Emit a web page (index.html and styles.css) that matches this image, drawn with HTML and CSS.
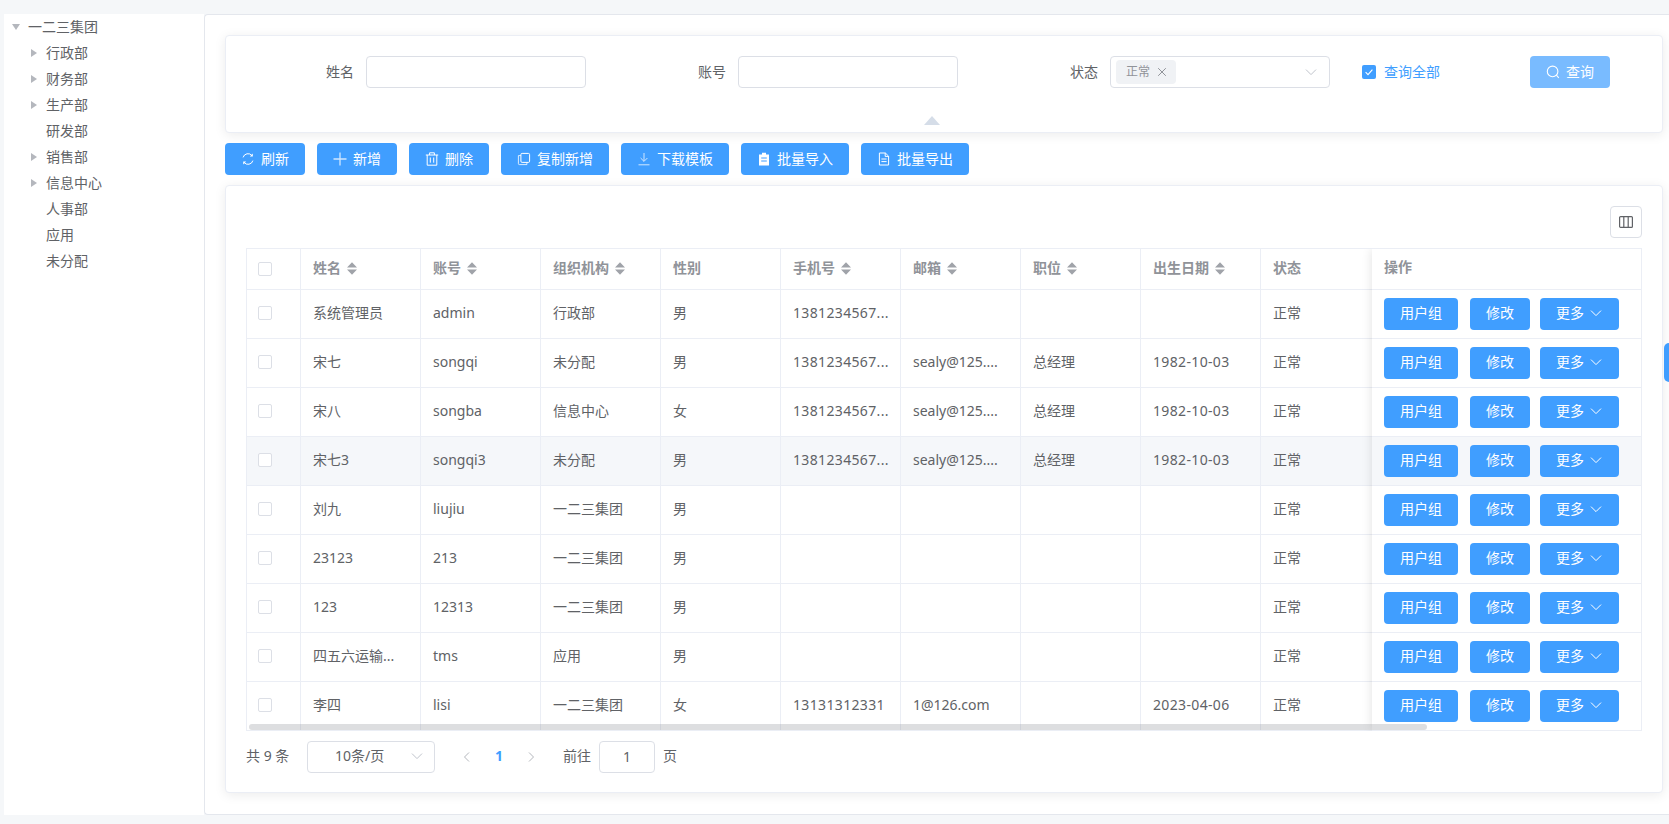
FILE: index.html
```html
<!DOCTYPE html>
<html lang="zh-CN">
<head>
<meta charset="utf-8">
<title>用户管理</title>
<link rel="stylesheet" href="styles.css">
</head>
<body>
<svg class="sprite" xmlns="http://www.w3.org/2000/svg">
  <symbol id="i-refresh" viewBox="0 0 14 14"><path d="M2.1 5.4A5.1 5.1 0 0 1 11 3.6" fill="none" stroke="currentColor"/><path d="M11.9 8.6A5.1 5.1 0 0 1 3 10.4" fill="none" stroke="currentColor"/><path d="M11.8 1.6v3h-3zM2.2 12.4v-3h3z" fill="currentColor"/></symbol>
  <symbol id="i-plus" viewBox="0 0 14 14"><path d="M7 .5v13M.5 7h13" fill="none" stroke="currentColor" stroke-width="1.3"/></symbol>
  <symbol id="i-trash" viewBox="0 0 14 14"><path d="M.8 3h12.4M4.6 3V.8h4.8V3M2.2 3v10.2h9.6V3M5.3 5.5v5.2M8.7 5.5v5.2" fill="none" stroke="currentColor"/></symbol>
  <symbol id="i-copy" viewBox="0 0 14 14"><rect x="3.9" y="1.4" width="8.7" height="9" rx="1.2" fill="none" stroke="currentColor"/><path d="M3.9 3.6H1.4v8a1 1 0 0 0 1 1h7.5v-2.2" fill="none" stroke="currentColor" opacity=".8"/></symbol>
  <symbol id="i-download" viewBox="0 0 14 14"><path d="M7 1v8.2M3.6 6l3.4 3.4L10.4 6M1.5 12.8h11" fill="none" stroke="currentColor"/></symbol>
  <symbol id="i-clip" viewBox="0 0 14 14"><path d="M5 .8h4v1.6h3v11H2v-11h3z" fill="currentColor"/><path d="M4.2 6h5.6M4.2 9h5.6" stroke="#409eff" stroke-width="1.2"/></symbol>
  <symbol id="i-doc" viewBox="0 0 14 14"><path d="M2.4 1h6l3.2 3.2v8.8H2.4zM8.2 1v3.4h3.4M4.4 7h5.2M4.4 9.6h5.2" fill="none" stroke="currentColor"/></symbol>
  <symbol id="i-search" viewBox="0 0 14 14"><circle cx="6.6" cy="6.4" r="5.3" fill="none" stroke="currentColor" stroke-width="1.1"/><path d="M10.4 10.2l2.4 2.6" fill="none" stroke="currentColor" stroke-width="1.1"/></symbol>
  <symbol id="i-down" viewBox="0 0 14 14"><path d="M2 4.6l5 5 5-5" fill="none" stroke="currentColor"/></symbol>
  <symbol id="i-left" viewBox="0 0 12 12"><path d="M8 1.5L3.5 6 8 10.5" fill="none" stroke="currentColor"/></symbol>
  <symbol id="i-right" viewBox="0 0 12 12"><path d="M4 1.5L8.5 6 4 10.5" fill="none" stroke="currentColor"/></symbol>
  <symbol id="i-close" viewBox="0 0 12 12"><path d="M2.2 2.2l7.6 7.6M9.8 2.2l-7.6 7.6" fill="none" stroke="currentColor"/></symbol>
  <symbol id="i-cols" viewBox="0 0 14 14"><rect x=".6" y="1.6" width="12.8" height="10.8" rx="1" fill="none" stroke="currentColor" stroke-width="1.2"/><path d="M4.8 1.6v10.8M9.2 1.6v10.8" fill="none" stroke="currentColor" stroke-width="1.2"/></symbol>
  <symbol id="i-sort" viewBox="0 0 10 13"><path d="M5 .2L10 5.6H0zM5 12.8L0 7.4h10z" fill="currentColor"/></symbol>
</svg>

<div class="app">
  <aside class="sidebar">
    <ul class="tree">
      <li class="node"><span class="caret open"></span>一二三集团</li>
      <li class="node child"><span class="caret"></span>行政部</li>
      <li class="node child"><span class="caret"></span>财务部</li>
      <li class="node child"><span class="caret"></span>生产部</li>
      <li class="node child"><span class="caret none"></span>研发部</li>
      <li class="node child"><span class="caret"></span>销售部</li>
      <li class="node child"><span class="caret"></span>信息中心</li>
      <li class="node child"><span class="caret none"></span>人事部</li>
      <li class="node child"><span class="caret none"></span>应用</li>
      <li class="node child"><span class="caret none"></span>未分配</li>
    </ul>
  </aside>

  <main class="panel">
    <section class="card search-card">
      <form class="search-form">
        <div class="field"><label class="field-label">姓名</label><input class="text-input" type="text"></div>
        <div class="field"><label class="field-label">账号</label><input class="text-input" type="text"></div>
        <div class="field">
          <label class="field-label">状态</label>
          <div class="select">
            <span class="tag">正常<svg class="tag-close"><use href="#i-close"/></svg></span>
            <svg class="select-arrow"><use href="#i-down"/></svg>
          </div>
        </div>
        <div class="check-field"><span class="checkbox checked"><svg viewBox="0 0 14 14"><path d="M3.6 7.2l2.4 2.4 4.4-5" fill="none" stroke="#fff" stroke-width="1.1"/></svg></span><span class="check-text">查询全部</span></div>
        <button class="btn btn-disabled" type="button"><svg class="icon"><use href="#i-search"/></svg>查询</button>
      </form>
      <span class="collapse-arrow"></span>
    </section>

    <div class="toolbar">
      <button class="btn" type="button"><svg class="icon"><use href="#i-refresh"/></svg>刷新</button>
      <button class="btn" type="button"><svg class="icon faint"><use href="#i-plus"/></svg>新增</button>
      <button class="btn" type="button"><svg class="icon"><use href="#i-trash"/></svg>删除</button>
      <button class="btn" type="button"><svg class="icon"><use href="#i-copy"/></svg>复制新增</button>
      <button class="btn" type="button"><svg class="icon faint"><use href="#i-download"/></svg>下载模板</button>
      <button class="btn" type="button"><svg class="icon"><use href="#i-clip"/></svg>批量导入</button>
      <button class="btn" type="button"><svg class="icon"><use href="#i-doc"/></svg>批量导出</button>
    </div>

    <section class="card table-card">
      <div class="table-tools"><button class="tool-btn" type="button"><svg class="icon"><use href="#i-cols"/></svg></button></div>
      <div class="table-wrap">
        <table class="grid">
          <colgroup><col class="col-check"><col class="col-data"><col class="col-data"><col class="col-data"><col class="col-data"><col class="col-data"><col class="col-data"><col class="col-data"><col class="col-data"><col class="col-data"></colgroup>
          <thead>
            <tr>
              <th><span class="checkbox"></span></th>
              <th>姓名<svg class="sort"><use href="#i-sort"/></svg></th>
              <th>账号<svg class="sort"><use href="#i-sort"/></svg></th>
              <th>组织机构<svg class="sort"><use href="#i-sort"/></svg></th>
              <th>性别</th>
              <th>手机号<svg class="sort"><use href="#i-sort"/></svg></th>
              <th>邮箱<svg class="sort"><use href="#i-sort"/></svg></th>
              <th>职位<svg class="sort"><use href="#i-sort"/></svg></th>
              <th>出生日期<svg class="sort"><use href="#i-sort"/></svg></th>
              <th>状态</th>
            </tr>
          </thead>
          <tbody>
            <tr><td><span class="checkbox"></span></td><td>系统管理员</td><td>admin</td><td>行政部</td><td>男</td><td class="num">1381234567...</td><td></td><td></td><td></td><td>正常</td></tr>
            <tr><td><span class="checkbox"></span></td><td>宋七</td><td>songqi</td><td>未分配</td><td>男</td><td class="num">1381234567...</td><td>sealy@125....</td><td>总经理</td><td class="num">1982-10-03</td><td>正常</td></tr>
            <tr><td><span class="checkbox"></span></td><td>宋八</td><td>songba</td><td>信息中心</td><td>女</td><td class="num">1381234567...</td><td>sealy@125....</td><td>总经理</td><td class="num">1982-10-03</td><td>正常</td></tr>
            <tr class="hover"><td><span class="checkbox"></span></td><td>宋七3</td><td>songqi3</td><td>未分配</td><td>男</td><td class="num">1381234567...</td><td>sealy@125....</td><td>总经理</td><td class="num">1982-10-03</td><td>正常</td></tr>
            <tr><td><span class="checkbox"></span></td><td>刘九</td><td>liujiu</td><td>一二三集团</td><td>男</td><td></td><td></td><td></td><td></td><td>正常</td></tr>
            <tr><td><span class="checkbox"></span></td><td>23123</td><td>213</td><td>一二三集团</td><td>男</td><td></td><td></td><td></td><td></td><td>正常</td></tr>
            <tr><td><span class="checkbox"></span></td><td>123</td><td>12313</td><td>一二三集团</td><td>男</td><td></td><td></td><td></td><td></td><td>正常</td></tr>
            <tr><td><span class="checkbox"></span></td><td>四五六运输...</td><td>tms</td><td>应用</td><td>男</td><td></td><td></td><td></td><td></td><td>正常</td></tr>
            <tr><td><span class="checkbox"></span></td><td>李四</td><td>lisi</td><td>一二三集团</td><td>女</td><td class="num">13131312331</td><td>1@126.com</td><td></td><td class="num">2023-04-06</td><td>正常</td></tr>
          </tbody>
        </table>

        <div class="fixed-col">
          <div class="fixed-head">操作</div>
          <div class="fixed-row"><button class="btn btn-row" type="button">用户组</button><button class="btn btn-row" type="button">修改</button><button class="btn btn-row btn-more" type="button">更多<svg class="icon"><use href="#i-down"/></svg></button></div>
          <div class="fixed-row"><button class="btn btn-row" type="button">用户组</button><button class="btn btn-row" type="button">修改</button><button class="btn btn-row btn-more" type="button">更多<svg class="icon"><use href="#i-down"/></svg></button></div>
          <div class="fixed-row"><button class="btn btn-row" type="button">用户组</button><button class="btn btn-row" type="button">修改</button><button class="btn btn-row btn-more" type="button">更多<svg class="icon"><use href="#i-down"/></svg></button></div>
          <div class="fixed-row hover"><button class="btn btn-row" type="button">用户组</button><button class="btn btn-row" type="button">修改</button><button class="btn btn-row btn-more" type="button">更多<svg class="icon"><use href="#i-down"/></svg></button></div>
          <div class="fixed-row"><button class="btn btn-row" type="button">用户组</button><button class="btn btn-row" type="button">修改</button><button class="btn btn-row btn-more" type="button">更多<svg class="icon"><use href="#i-down"/></svg></button></div>
          <div class="fixed-row"><button class="btn btn-row" type="button">用户组</button><button class="btn btn-row" type="button">修改</button><button class="btn btn-row btn-more" type="button">更多<svg class="icon"><use href="#i-down"/></svg></button></div>
          <div class="fixed-row"><button class="btn btn-row" type="button">用户组</button><button class="btn btn-row" type="button">修改</button><button class="btn btn-row btn-more" type="button">更多<svg class="icon"><use href="#i-down"/></svg></button></div>
          <div class="fixed-row"><button class="btn btn-row" type="button">用户组</button><button class="btn btn-row" type="button">修改</button><button class="btn btn-row btn-more" type="button">更多<svg class="icon"><use href="#i-down"/></svg></button></div>
          <div class="fixed-row"><button class="btn btn-row" type="button">用户组</button><button class="btn btn-row" type="button">修改</button><button class="btn btn-row btn-more" type="button">更多<svg class="icon"><use href="#i-down"/></svg></button></div>
        </div>
        <div class="h-scroll"></div>
      </div>

      <div class="pager">
        <span class="pager-total">共 9 条</span>
        <div class="pager-size"><span>10条/页</span><svg class="select-arrow"><use href="#i-down"/></svg></div>
        <svg class="pager-nav"><use href="#i-left"/></svg>
        <span class="pager-num">1</span>
        <svg class="pager-nav"><use href="#i-right"/></svg>
        <span class="pager-goto">前往</span>
        <input class="pager-input" type="text" value="1">
        <span class="pager-unit">页</span>
      </div>
    </section>
  </main>
</div>
<div class="side-tab"></div>
</body>
</html>
```

FILE: styles.css
```css
* { box-sizing: border-box; }
html, body { margin: 0; padding: 0; }
body {
  height: 824px;
  overflow: hidden;
  background: #f5f7f9;
  color: #606266;
  font-family: "Noto Sans", "Noto Sans CJK SC", sans-serif;
  font-size: 14px;
  line-height: 20px;
}
.sprite { position: absolute; width: 0; height: 0; overflow: hidden; }

.app { display: flex; height: 815px; padding: 14px 0 0 4px; }

/* tree */
.sidebar { width: 200px; flex: none; background: #fff; }
.tree { list-style: none; margin: 0; padding: 0; }
.node { display: flex; align-items: center; height: 26px; padding-left: 0; color: #606266; }
.node.child { padding-left: 18px; }
.caret { display: flex; flex: none; width: 24px; height: 26px; padding-left: 9px; align-items: center; position: relative; }
.caret::before { content: ""; border-style: solid; border-width: 4px 0 4px 6px; border-color: transparent transparent transparent #b4b7bd; }
.caret.open::before { border-width: 6px 4px 0 4px; border-color: #b4b7bd transparent transparent transparent; margin-left: -1px; }
.caret.none::before { display: none; }

/* main */
.panel {
  flex: 1;
  min-width: 0;
  background: #fff;
  border: 1px solid #e4e7ed;
  border-right: 0;
  border-radius: 4px 0 0 4px;
  padding: 20px 6px 0 20px;
}
.card {
  background: #fff;
  border: 1px solid #ebeef5;
  border-radius: 4px;
  box-shadow: 0 2px 12px rgba(0, 0, 0, .08);
}

.search-card { position: relative; height: 98px; padding: 20px 0 0; }
.search-form { display: flex; align-items: center; height: 32px; gap: 12px; }
.field { display: flex; align-items: center; width: 360px; flex: none; }
.field-label { flex: 1; text-align: right; padding-right: 12px; }
.text-input {
  width: 220px;
  height: 32px;
  border: 1px solid #dcdfe6;
  border-radius: 4px;
  background: #fff;
  outline: 0;
  padding: 0 12px;
  font: inherit;
  color: inherit;
}
.select {
  position: relative;
  display: flex;
  align-items: center;
  width: 220px;
  height: 32px;
  border: 1px solid #dcdfe6;
  border-radius: 4px;
  padding-left: 5px;
}
.tag {
  display: flex;
  align-items: center;
  width: 60px;
  height: 24px;
  padding-left: 10px;
  background: #f0f2f5;
  border-radius: 4px;
  color: #909399;
  font-size: 12px;
}
.tag-close { width: 12px; height: 12px; margin-left: 6px; color: #909399; }
.select-arrow { width: 14px; height: 14px; color: #c0c4cc; }
.select > .select-arrow { margin-left: auto; margin-right: 11px; }

.checkbox {
  display: inline-block;
  width: 14px;
  height: 14px;
  border: 1px solid #dcdfe6;
  border-radius: 2px;
  background: #fff;
  vertical-align: middle;
}
.checkbox.checked { background: #409eff; border: 0; }
.checkbox svg { display: block; width: 14px; height: 14px; }
.check-field { display: flex; align-items: center; flex: none; width: 156px; margin-left: 20px; gap: 8px; color: #409eff; }
.check-field .checkbox { flex: none; }

.btn {
  display: inline-flex;
  align-items: center;
  justify-content: center;
  height: 32px;
  padding: 0 16px;
  border: 0;
  border-radius: 4px;
  background: #409eff;
  color: #fff;
  font: inherit;
  gap: 6px;
  white-space: nowrap;
}
.btn-disabled { background: #79bbff; width: 80px; padding: 0; flex: none; }
.icon { width: 14px; height: 14px; flex: none; }
.icon.faint { opacity: .75; }

.collapse-arrow {
  position: absolute;
  left: 698px;
  bottom: 7px;
  border-style: solid;
  border-width: 0 8px 9px 8px;
  border-color: transparent transparent #d5dde8 transparent;
}

.toolbar { display: flex; gap: 12px; margin: 10px 0; }

.table-card { height: 608px; padding: 20px; }
.table-tools { display: flex; justify-content: flex-end; margin-bottom: 10px; }
.tool-btn {
  display: flex;
  align-items: center;
  justify-content: center;
  width: 32px;
  height: 32px;
  padding: 0;
  border: 1px solid #dcdfe6;
  border-radius: 4px;
  background: #fff;
  color: #606266;
}

.table-wrap {
  position: relative;
  height: 483px;
  border-top: 1px solid #ebeef5;
  border-left: 1px solid #ebeef5;
  border-right: 1px solid #ebeef5;
  overflow: hidden;
}
.grid { width: 1134px; table-layout: fixed; border-collapse: separate; border-spacing: 0; }
.col-check { width: 54px; }
.col-data { width: 120px; }
.grid th, .grid td {
  padding: 0 12px;
  border-right: 1px solid #ebeef5;
  border-bottom: 1px solid #ebeef5;
  text-align: left;
  white-space: nowrap;
  overflow: hidden;
  background: #fff;
}
.grid th { height: 41px; padding-bottom: 3px; color: #909399; font-weight: 600; }
.grid td { height: 49px; padding-bottom: 2px; }
.grid th:first-child, .grid td:first-child { padding-left: 11px; }
.grid td:first-child { padding-bottom: 4px; }
.grid tr.hover td { background: #f5f7fa; }
.grid td.num { letter-spacing: .35px; }
.sort { width: 10px; height: 13px; margin-left: 6px; color: #a0a3a9; vertical-align: -2px; }

.fixed-col {
  position: absolute;
  top: 0;
  right: 0;
  bottom: 0;
  width: 269px;
  background: #fff;
  box-shadow: 0 0 10px rgba(0, 0, 0, .12);
}
.fixed-head {
  height: 41px;
  padding: 8px 12px 0;
  color: #909399;
  font-weight: 600;
  border-bottom: 1px solid #ebeef5;
}
.fixed-row {
  display: flex;
  gap: 12px;
  height: 49px;
  padding: 8px 12px 0;
  border-bottom: 1px solid #ebeef5;
}
.fixed-row.hover { background: #f5f7fa; }
.btn-row { flex: none; padding-bottom: 2px; }
.btn-more { gap: 5px; margin-left: -2px; }

.h-scroll {
  position: absolute;
  left: 2px;
  bottom: 1px;
  width: 1178px;
  height: 6px;
  border-radius: 3px;
  background: rgba(144, 147, 153, .3);
}

.pager { display: flex; align-items: center; height: 32px; margin-top: 10px; }
.pager-total { width: 61px; flex: none; padding-bottom: 2px; }
.pager-size {
  position: relative;
  display: flex;
  align-items: center;
  width: 128px;
  height: 32px;
  flex: none;
  padding: 0 0 2px 27px;
  border: 1px solid #dcdfe6;
  border-radius: 4px;
}
.pager-size .select-arrow { margin-left: auto; margin-right: 10px; }
.pager-nav { width: 12px; height: 12px; color: #b4b7bd; flex: none; }
.pager-size + .pager-nav { margin-left: 26px; }
.pager-num { width: 52px; flex: none; text-align: center; color: #409eff; font-weight: 700; padding-bottom: 2px; }
.pager-goto { margin-left: 26px; flex: none; padding-bottom: 2px; }
.pager-input {
  width: 56px;
  height: 32px;
  margin-left: 8px;
  padding: 0 0 2px;
  border: 1px solid #dcdfe6;
  border-radius: 4px;
  outline: 0;
  text-align: center;
  font: inherit;
  color: inherit;
  background: #fff;
}
.pager-unit { margin-left: 8px; padding-bottom: 2px; }

.side-tab {
  position: fixed;
  top: 343px;
  right: 0;
  width: 5px;
  height: 39px;
  background: #409eff;
  border-radius: 5px 0 0 5px;
}
```
